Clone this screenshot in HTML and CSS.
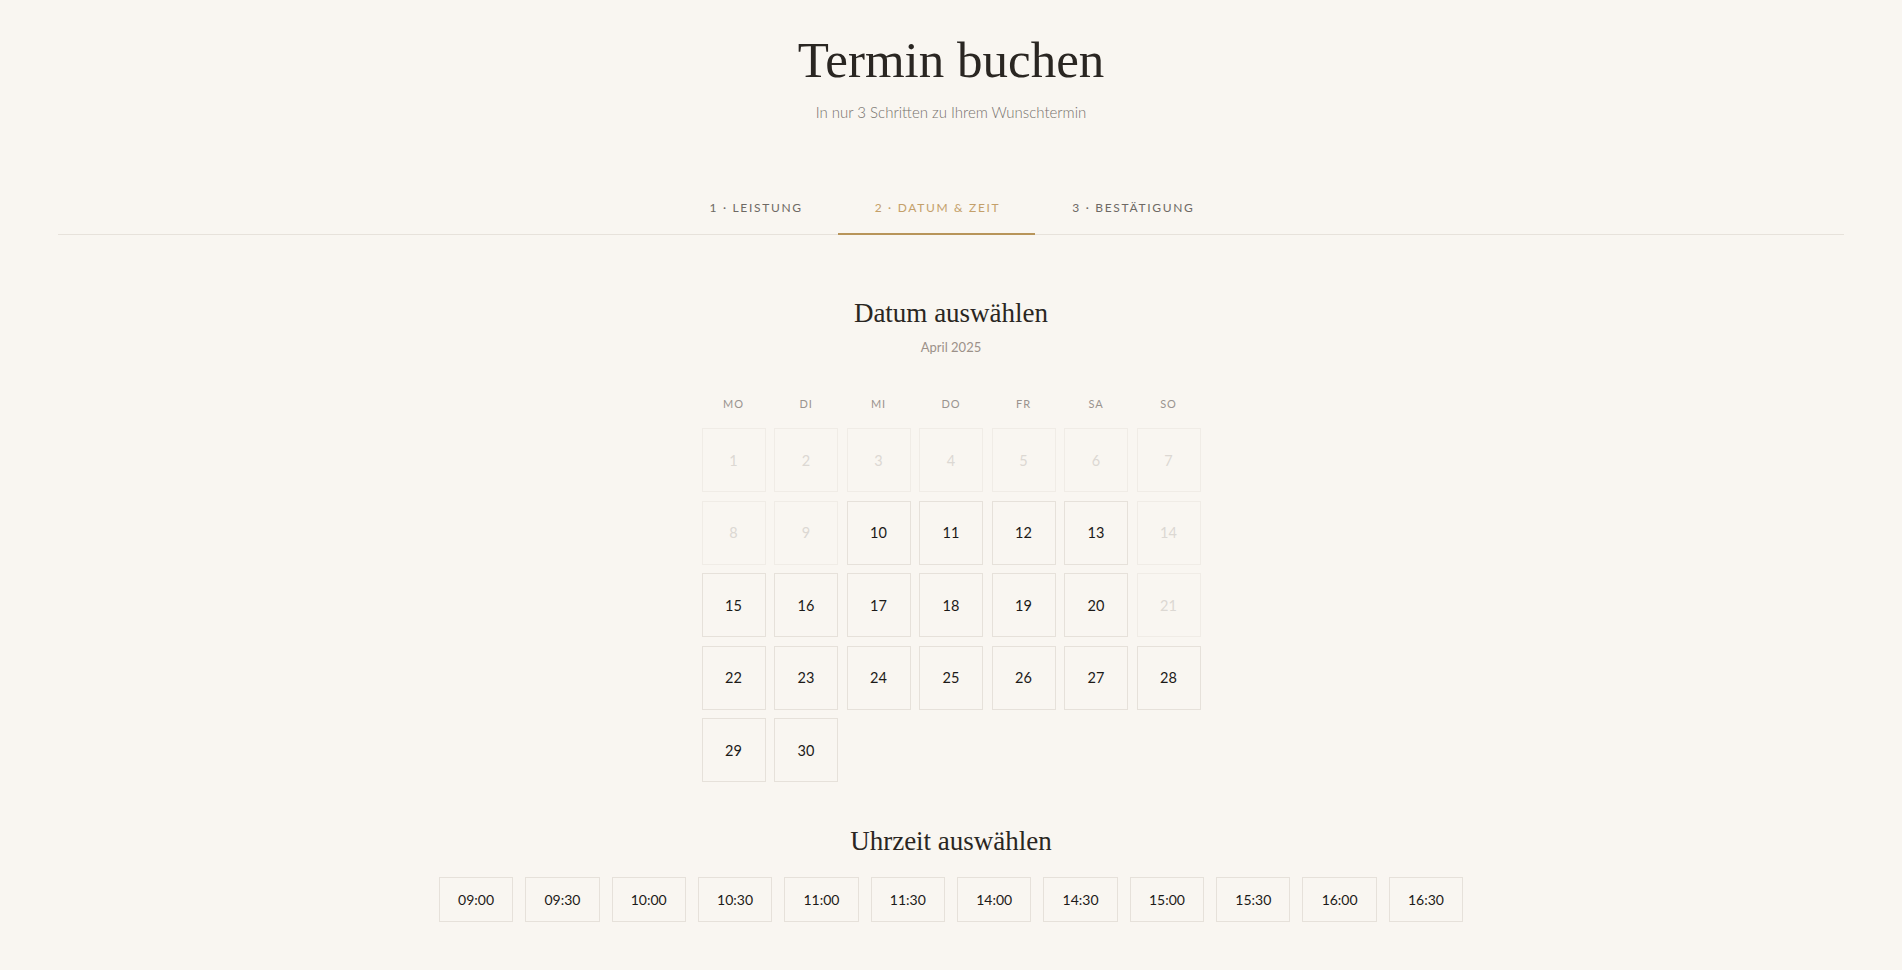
FILE: index.html
```html
<!DOCTYPE html>
<html lang="de">
<head>
<meta charset="utf-8">
<title>Termin buchen</title>
<link rel="stylesheet" href="styles.css">
</head>
<body>
<div class="page">
  <header class="hero">
    <h1 class="hero-title">Termin buchen</h1>
    <p class="hero-sub">In nur 3 Schritten zu Ihrem Wunschtermin</p>
  </header>

  <nav class="steps">
    <div class="step">1 · Leistung</div>
    <div class="step step-active">2 · Datum &amp; Zeit</div>
    <div class="step">3 · Bestätigung</div>
  </nav>

  <section class="date-section">
    <h2 class="section-title">Datum auswählen</h2>
    <p class="month">April 2025</p>

    <div class="weekdays">
      <span>MO</span><span>DI</span><span>MI</span><span>DO</span><span>FR</span><span>SA</span><span>SO</span>
    </div>
    <div class="days">
      <div class="day day-off">1</div>
      <div class="day day-off">2</div>
      <div class="day day-off">3</div>
      <div class="day day-off">4</div>
      <div class="day day-off">5</div>
      <div class="day day-off">6</div>
      <div class="day day-off">7</div>
      <div class="day day-off">8</div>
      <div class="day day-off">9</div>
      <div class="day">10</div>
      <div class="day">11</div>
      <div class="day">12</div>
      <div class="day">13</div>
      <div class="day day-off">14</div>
      <div class="day">15</div>
      <div class="day">16</div>
      <div class="day">17</div>
      <div class="day">18</div>
      <div class="day">19</div>
      <div class="day">20</div>
      <div class="day day-off">21</div>
      <div class="day">22</div>
      <div class="day">23</div>
      <div class="day">24</div>
      <div class="day">25</div>
      <div class="day">26</div>
      <div class="day">27</div>
      <div class="day">28</div>
      <div class="day">29</div>
      <div class="day">30</div>
    </div>
  </section>

  <section class="time-section">
    <h2 class="section-title">Uhrzeit auswählen</h2>
    <div class="slots">
      <div class="slot">09:00</div>
      <div class="slot">09:30</div>
      <div class="slot">10:00</div>
      <div class="slot">10:30</div>
      <div class="slot">11:00</div>
      <div class="slot">11:30</div>
      <div class="slot">14:00</div>
      <div class="slot">14:30</div>
      <div class="slot">15:00</div>
      <div class="slot">15:30</div>
      <div class="slot">16:00</div>
      <div class="slot">16:30</div>
    </div>
  </section>
</div>
</body>
</html>
```

FILE: styles.css
```css
html, body {
  margin: 0;
  padding: 0;
  background: #f9f6f1;
}

body {
  font-family: "Lato", "Liberation Sans", sans-serif;
  color: #1c1a18;
}

.page {
  padding: 0 58px;
}

.hero {
  text-align: center;
  padding-top: 30px;
}

.hero-title {
  margin: 0;
  font-family: "Liberation Serif", serif;
  font-weight: 400;
  font-size: 51px;
  line-height: 60px;
  color: #2a2622;
}

.hero-sub {
  margin: 12px 0 0;
  font-size: 15px;
  line-height: 20px;
  font-weight: 300;
  color: #76716c;
}

.steps {
  margin-top: 59px;
  display: flex;
  justify-content: center;
  border-bottom: 1px solid #e7e2db;
}

.step {
  padding: 19px 35px 17px 37px;
  font-size: 12px;
  line-height: 16px;
  letter-spacing: 0.14em;
  text-transform: uppercase;
  color: #6e6964;
  border-bottom: 2px solid transparent;
  margin-bottom: -1px;
}

.step-active {
  color: #c4a06a;
  border-bottom-color: #b8955a;
}

.date-section {
  margin-top: 62px;
  display: flex;
  flex-direction: column;
  align-items: center;
}

.section-title {
  margin: 0;
  font-family: "Liberation Serif", serif;
  font-weight: 400;
  font-size: 27px;
  line-height: 32px;
  color: #2a2622;
  text-align: center;
}

.month {
  margin: 9px 0 0;
  font-size: 13px;
  line-height: 18px;
  color: #9c9189;
}

.weekdays {
  margin-top: 40px;
  display: grid;
  grid-template-columns: repeat(7, 64px);
  column-gap: 8.5px;
  font-size: 11px;
  line-height: 16px;
  letter-spacing: 0.08em;
  color: #9a948f;
  text-align: center;
}

.days {
  margin-top: 16px;
  display: grid;
  grid-template-columns: repeat(7, 64px);
  grid-auto-rows: 64px;
  gap: 8.5px;
}

.day {
  box-sizing: border-box;
  border: 1px solid #e6e1da;
  display: flex;
  align-items: center;
  justify-content: center;
  font-size: 14.5px;
  color: #1c1a18;
}

.day-off {
  border-color: #f0ece6;
  color: #dcd8d3;
}

.time-section {
  margin-top: 43px;
  display: flex;
  flex-direction: column;
  align-items: center;
}

.slots {
  margin-top: 20px;
  display: flex;
  flex-wrap: wrap;
  justify-content: center;
  gap: 12px;
}

.slot {
  border: 1px solid #e6e1da;
  padding: 11.5px 18.2px;
  font-size: 14px;
  line-height: 20px;
  color: #1c1a18;
}
```
